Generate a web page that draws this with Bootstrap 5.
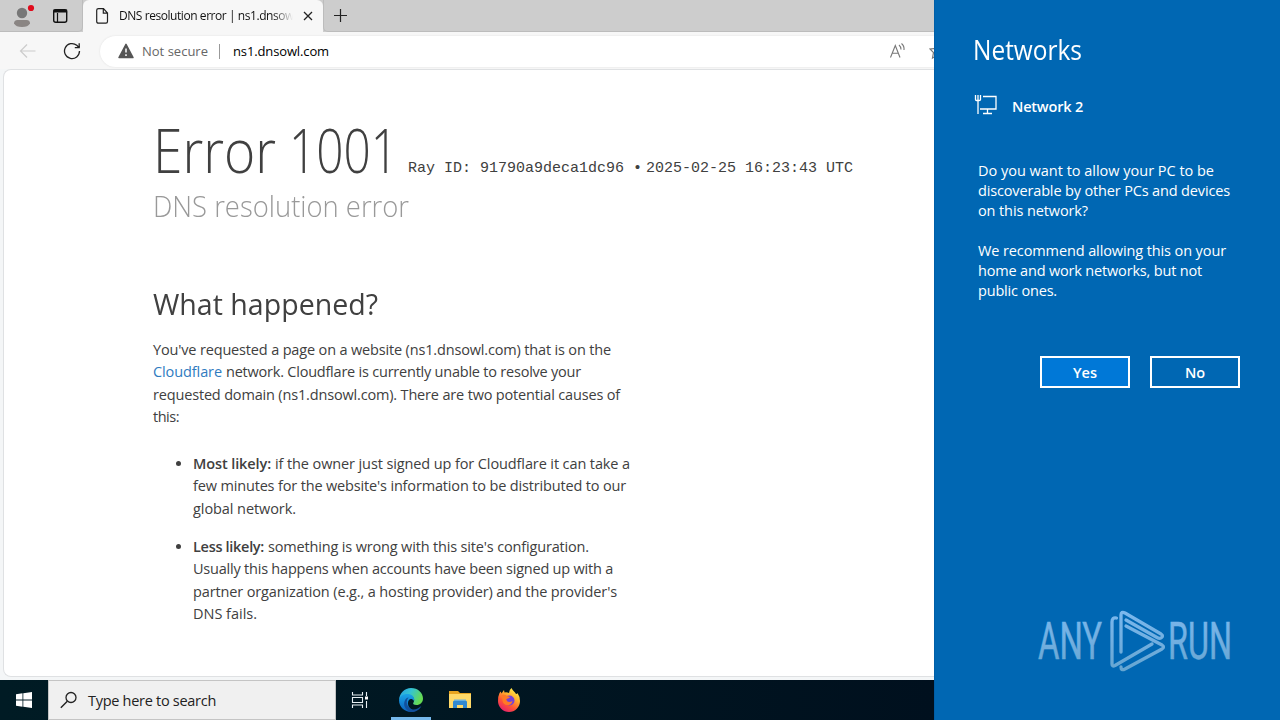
<!DOCTYPE html>
<html lang="en">
<head>
<meta charset="utf-8">
<meta name="viewport" content="width=device-width, initial-scale=1">
<title>DNS resolution error | ns1.dnsowl.com</title>
<link rel="stylesheet" href="https://cdn.jsdelivr.net/npm/bootstrap@5.3.0/dist/css/bootstrap.min.css">
<style>
html,body{height:720px;overflow:hidden}
body{font-family:"Open Sans","Noto Sans",sans-serif;font-size:14.5px;color:#404040;background:#f4f6f7}
svg{display:block;flex:none}
[data-w]{white-space:nowrap;display:inline-block;vertical-align:top}
[data-fit]{transform-origin:0 0}
.desktop{width:1280px;height:720px}
.main-side{width:934px;overflow:hidden}
.tabstrip{height:32px;background:#cdcdcd}
.tab-left{width:83px;padding:4px 0 0 11px;border-right:1px solid #bcbcbc;border-bottom:1px solid #bcbcbc;border-radius:0 0 5px 0}
.tab-active{width:240px;background:#f7f7f7;border-radius:6px 6px 0 0;padding-left:12px;font-size:12px;color:#111}
.tab-title{width:174px;margin-left:9px;overflow:hidden;-webkit-mask-image:linear-gradient(90deg,#000 154px,transparent 174px);mask-image:linear-gradient(90deg,#000 154px,transparent 174px)}
.tab-rest{border-left:1px solid #bcbcbc;border-bottom:1px solid #bcbcbc;border-radius:0 0 0 5px;padding-left:9px}
.toolbar{height:37px;background:#f7f7f7;padding-left:19px}
.address{height:31px;margin-left:19px;margin-top:1px;background:#fff;border-radius:16px 0 0 16px;box-shadow:0 0 2px #ddd;padding-left:18px;font-size:13px}
.address [data-w]{padding-top:1px}
.divider{width:1px;height:15px;background:#999;margin:0 13px 0 11px}
.page{height:608px;margin-left:3px;background:#fff;border:1px solid #dfe1e3;border-right:0;border-radius:8px 0 0 8px;padding:45px 0 0 149px}
.err-title{font-size:60px;font-weight:300;line-height:70px;height:70px;width:244px}
.err-word{width:135.5px;flex:none}
.ray{font:15px/18px "Liberation Mono",monospace;padding-top:45px;margin-left:11px;white-space:pre}
.ray-dot{width:22px;padding-left:9px}
.err-sub{font-size:30px;font-weight:300;line-height:40px;color:#999;margin-top:1px;height:40px}
.err-h{font-size:29.5px;font-weight:400;line-height:40px;margin-top:58px;height:40px}
.copy{line-height:22.5px;margin-top:14.6px}
.copy-list{line-height:22.5px;margin-top:24px;padding-left:40px}
.copy-list li{margin-bottom:15.9px}
.ln{display:block;height:22.5px;white-space:nowrap}
.ln>*+*{margin-left:4px}
.copy a{color:#2f7bbf}
b{font-weight:600}
.taskbar{height:40px;margin-top:3px;background:linear-gradient(90deg,#001b24 0,#001722 45%,#00101e 100%)}
.start{width:48px}
.search{width:288px;background:#f0f0f0;border:1px solid #c4c4c4;padding-left:11px;color:#222;font-size:14.5px}
.search span{margin-left:10px;padding-top:2px}
.task-edge{width:40px;height:40px;border-bottom:3px solid #76b9ed;margin-left:22px}
.task-view{margin:11px 0 0 15px}
.task-files{margin:10px 0 0 18px}
.task-fox{margin:8px 0 0 26px}
.panel-net{width:346px;background:#0067b3;color:#fff;padding:31px 0 0 38px;border-left:1px solid #005fa8}
.net-title{font-size:27px;line-height:38px;height:38px;font-weight:400}
.net-row{margin-top:26px;height:24px}
.net-row svg{margin:-1px 0 0 1px}
.net-row b{margin-left:14px;line-height:24px}
.net-copy{line-height:20px;margin:42px 0 0 5px}
.net-copy div{height:20px}
.net-btns{gap:20px;padding-left:67px;margin-top:55px}
.net-btns .btn{width:90px;height:32px;border:2px solid #fff;border-radius:0;padding:2px 0 0;font-size:14.5px;font-weight:600;line-height:26px;color:#fff}
.net-btns .yes{background:#0078d7}
.brandmark{margin:216px 0 0 61px}
</style>
</head>
<body>
<div class="desktop d-flex">
  <div class="main-side d-flex flex-column">
    <div class="tabstrip d-flex">
      <div class="tab-left d-flex">
        <svg width="24" height="26" viewBox="0 0 24 26"><circle cx="11" cy="9" r="5.2" fill="#777"/><path d="M3 19.5Q3 16 6.500 16H15.500Q19 16 19 19.500Q17 23 11 23Q5 23 3 19.500Z" fill="#8a8583"/><circle cx="20" cy="4" r="3.100" fill="#e00b1c"/></svg>
        <svg class="ms-3" width="20" height="24" viewBox="0 0 20 24"><rect x="2.700" y="5.700" width="13" height="12.600" rx="2" fill="none" stroke="#111" stroke-width="1.400"/><path d="M3 6h12.500v2H3zM6.500 9v9" fill="#111" stroke="#111" stroke-width="1.200"/></svg>
      </div>
      <div class="tab-active d-flex align-items-center">
        <svg width="15" height="18" viewBox="0 0 15 18"><path d="M3.500 1.700H8.500L12.500 6V14.500Q12.500 16.200 11 16.200H3.500Q1.700 16.200 1.700 14.500V3.300Q1.700 1.700 3.500 1.700ZM8.300 2V6.200H12.500" fill="none" stroke="#222" stroke-width="1.200"/></svg>
        <div class="tab-title"><span data-w="203">DNS resolution error | ns1.dnsowl.com</span></div>
        <svg class="ms-2" width="14" height="14" viewBox="0 0 14 14"><path d="M3 3l8 8M11 3l-8 8" stroke="#222" stroke-width="1.300"/></svg>
      </div>
      <div class="tab-rest flex-fill d-flex align-items-center">
        <svg width="16" height="16" viewBox="0 0 16 16"><path d="M7.500 1v13M1 7.500h13" stroke="#222" stroke-width="1.200"/></svg>
      </div>
    </div>
    <div class="toolbar d-flex align-items-center">
      <svg width="18" height="16" viewBox="0 0 18 16"><path d="M16.500 8H1.500M8 1.500L1.500 8L8 14.500" fill="none" stroke="#ccc" stroke-width="1.200"/></svg>
      <svg style="margin-left:26px" width="18" height="18" viewBox="0 0 18 18"><path d="M16.500 9A7.500 7.500 0 1 1 13.800 3.300L16 5.500M16.200 1.200V5.600H11.800" fill="none" stroke="#222" stroke-width="1.300"/></svg>
      <div class="address flex-fill d-flex align-items-center">
        <svg width="16" height="16" viewBox="0 0 16 16"><path d="M8 1.300L15 14.500H1Z" fill="#555" stroke="#555" stroke-width="1.500" stroke-linejoin="round"/><path d="M8 5.500v4M8 11.300v1.700" stroke="#fff" stroke-width="1.500"/></svg>
        <span data-w="66" class="ms-2" style="color:#666">Not secure</span><span class="divider"></span><span data-w="96" class="text-black">ns1.dnsowl.com</span>
        <svg class="ms-auto" width="18" height="18" viewBox="0 0 18 18"><path d="M1.500 15.500L6.300 3.500L11 15.500M3.200 11.300H9.500M10 3Q12 4.700 12 7.500M12.500 1.500Q15.500 4 15 8" fill="none" stroke="#777" stroke-width="1.100"/></svg>
        <svg style="margin-left:22px" width="5" height="18" viewBox="0 0 5 18"><path d="M8 3L6.300 6.500L1 7L4.500 10.500L3.500 16L8 13.500" fill="none" stroke="#777" stroke-width="1.200"/></svg>
      </div>
    </div>
    <main class="page">
      <div class="d-flex"><div class="err-title d-flex"><div class="err-word"><span data-w="123" data-fit="scale">Error</span></div><span data-w="109" data-fit="scale">1001</span></div><div class="ray d-flex"><span>Ray ID: 91790a9deca1dc96</span><span class="ray-dot">•</span><span>2025-02-25 16:23:43 UTC</span></div></div>
      <div class="err-sub"><span data-w="256" data-fit="scale">DNS resolution error</span></div>
      <h2 class="err-h mb-0"><span data-w="225" data-fit="scale">What happened?</span></h2>
      <div class="copy">
        <div class="ln"><span data-w="458">You've requested a page on a website (ns1.dnsowl.com) that is on the</span></div>
        <div class="ln d-flex"><a class="text-decoration-none" data-w="69">Cloudflare</a><span data-w="355">network. Cloudflare is currently unable to resolve your</span></div>
        <div class="ln"><span data-w="467">requested domain (ns1.dnsowl.com). There are two potential causes of</span></div>
        <div class="ln"><span data-w="26">this:</span></div>
      </div>
      <ul class="copy-list mb-0">
        <li><div class="ln"><b data-w="78">Most likely:</b><span data-w="355">if the owner just signed up for Cloudflare it can take a</span></div>
          <div class="ln"><span data-w="433">few minutes for the website's information to be distributed to our</span></div>
          <div class="ln"><span data-w="103">global network.</span></div></li>
        <li><div class="ln"><b data-w="71">Less likely:</b><span data-w="321">something is wrong with this site's configuration.</span></div>
          <div class="ln"><span data-w="420">Usually this happens when accounts have been signed up with a</span></div>
          <div class="ln"><span data-w="424">partner organization (e.g., a hosting provider) and the provider's</span></div>
          <div class="ln"><span data-w="64">DNS fails.</span></div></li>
      </ul>
    </main>
    <div class="taskbar d-flex">
      <div class="start d-flex align-items-center justify-content-center"><svg width="16" height="16" viewBox="0 0 16 16"><path d="M0 2.200L6.500 1.300V7.500H0ZM7.300 1.200L16 0V7.500H7.300ZM0 8.400H6.500V14.700L0 13.800ZM7.300 8.400H16V16L7.300 14.800Z" fill="#fff"/></svg></div>
      <div class="search d-flex align-items-center">
        <svg width="18" height="18" viewBox="0 0 18 18"><circle cx="11" cy="6.500" r="5" fill="none" stroke="#222" stroke-width="1.300"/><path d="M7.300 10.200L.8 16.700" stroke="#222" stroke-width="1.400"/></svg>
        <span data-w="128">Type here to search</span>
      </div>
      <svg class="task-view" width="18" height="18" viewBox="0 0 18 18"><path d="M1.500 1V4H11.500V1M1.500 17V14H11.500V17M1.500 6.500H11.500V11.500H1.500ZM15.500 1V5M15.500 10V17" fill="none" stroke="#e8f0f4" stroke-width="1.100"/><rect x="14" y="5.500" width="3" height="3" fill="#fff"/></svg>
      <div class="task-edge d-flex justify-content-center"><svg class="mt-2" width="24" height="24" viewBox="0 0 24 24"><defs><linearGradient id="ea" x1="0" y1="0" x2="1" y2=".4"><stop offset="0" stop-color="#249de6"/><stop offset=".5" stop-color="#35c4d2"/><stop offset="1" stop-color="#65da53"/></linearGradient><linearGradient id="eb" x1="0" y1="0" x2="0" y2="1"><stop offset="0" stop-color="#1aa4e7"/><stop offset="1" stop-color="#0b60bd"/></linearGradient></defs><path d="M0 12C.5 5 5.500 0 12 0C19 0 24 5 24 10.500C24 14.500 21 17 17.500 17C14.500 17 13.500 15.800 14.500 14.500C16.500 11 14 7.500 9.500 7.500C5 7.500 1 9.500 0 12Z" fill="url(#ea)"/><path d="M0 12C1 7.500 5 5.500 9.500 6C14 6.500 16 10 15 13C12 9 8.500 12 9 16C9.500 20 13 22.500 17 22.700C10 26 0 22 0 12Z" fill="url(#eb)"/><path d="M9.700 9.500C7 12 7 17 10.500 20C14 23 19 21 22.300 18C20.500 22 16.500 24 12.500 24C7 23 4 18 5.500 13.500C6.300 11 8 9.500 9.700 9.500Z" fill="#124f9c"/></svg></div>
      <svg class="task-files" width="22" height="20" viewBox="0 0 22 20"><path d="M0 1H9L11 3H22V18H0Z" fill="#e8a520"/><path d="M0 4H22V18H0Z" fill="#ffd968"/><path d="M4 18V12Q4 10.500 5.500 10.500H16.500Q18 10.500 18 12V18H14V15H8V18Z" fill="#3289d0"/><path d="M5 9.500H17V11H5Z" fill="#6bb1de"/></svg>
      <svg class="task-fox" width="24" height="24" viewBox="0 0 24 24"><defs><linearGradient id="fa" x1=".8" y1="0" x2=".2" y2="1"><stop offset="0" stop-color="#fff44f"/><stop offset=".35" stop-color="#ffb02e"/><stop offset=".65" stop-color="#ff5634"/><stop offset="1" stop-color="#e31a74"/></linearGradient></defs><path d="M2.500 5L3.800 3.500L4.500 5.500L7 2L7.500 4.500Q10 4 12 5Q12 2 14.500 0Q15.500 2.500 18 4.500L19 6Q20.500 6 20.500 5Q23 8.500 23 13A11 11 0 0 1 1 13Q1 8 2.500 5Z" fill="url(#fa)"/><circle cx="12.500" cy="12.500" r="5" fill="#7542d8"/><path d="M4.500 7Q8 6 10 8L13 9Q12 10.500 9.500 11Q9 13.500 12 14Q14 14 15.500 13Q14.500 17.500 10.500 17Q5 16.500 5.500 11Z" fill="#ff7a25"/></svg>
    </div>
  </div>
  <aside class="panel-net">
    <div class="net-title"><span data-w="109" data-fit="scale">Networks</span></div>
    <div class="net-row d-flex">
      <svg width="24" height="22" viewBox="0 0 24 22"><path d="M1.500 1V5.500Q1.500 6.500 2.500 6.500H5Q6.500 6.500 6.500 5.500V1M4 1V20M9 2.500H22V15H6M13.500 15V19M9 19.500H18" fill="none" stroke="#fff" stroke-width="1.300"/></svg>
      <b data-w="71">Network 2</b>
    </div>
    <div class="net-copy">
      <div><span data-w="236">Do you want to allow your PC to be</span></div><div><span data-w="252">discoverable by other PCs and devices</span></div><div><span data-w="110">on this network?</span></div><div></div>
      <div><span data-w="248">We recommend allowing this on your</span></div><div><span data-w="224">home and work networks, but not</span></div><div><span data-w="79">public ones.</span></div>
    </div>
    <div class="net-btns d-flex"><button class="btn yes">Yes</button><button class="btn">No</button></div>
    <svg class="brandmark" width="206" height="72" viewBox="0 0 206 72">
      <defs><linearGradient id="wm" gradientUnits="userSpaceOnUse" x1="0" y1="6" x2="0" y2="68"><stop offset="0" stop-color="#7bb8ee"/><stop offset=".5" stop-color="#72afe0"/><stop offset="1" stop-color="#65a5d0"/></linearGradient></defs>
      <g fill="url(#wm)" stroke="url(#wm)" stroke-width=".5" font-family="Roboto,sans-serif" font-size="51.5"><text x="4" y="55" textLength="64" lengthAdjust="spacingAndGlyphs">ANY</text><text x="134" y="55" textLength="64" lengthAdjust="spacingAndGlyphs">RUN</text></g>
      <path d="M82.500 14Q78 13 78 18V60Q78 63 81 61.500L118 40M87 48V11Q87 7 91 9L127 30Q130 32 127 34Q125.500 35 123 33.500L92 16M92 22L128 41Q131 43 128 45L91 65Q87 67 87 63" fill="none" stroke="url(#wm)" stroke-width="3.300" stroke-linejoin="round" stroke-linecap="round"/>
    </svg>
  </aside>
</div>
<script src="https://cdn.jsdelivr.net/npm/bootstrap@5.3.0/dist/js/bootstrap.bundle.min.js"></script>
<script>
// Fit each line to its measure: headings by glyph width, body text by tracking.
document.querySelectorAll('[data-w]').forEach(function (el) {
  var w = +el.dataset.w, n = el.textContent.length, now = el.getBoundingClientRect().width;
  if (el.dataset.fit) el.style.transform = 'scaleX(' + w / now + ')';
  else el.style.letterSpacing = (w - now) / n + 'px';
});
</script>
</body>
</html>
